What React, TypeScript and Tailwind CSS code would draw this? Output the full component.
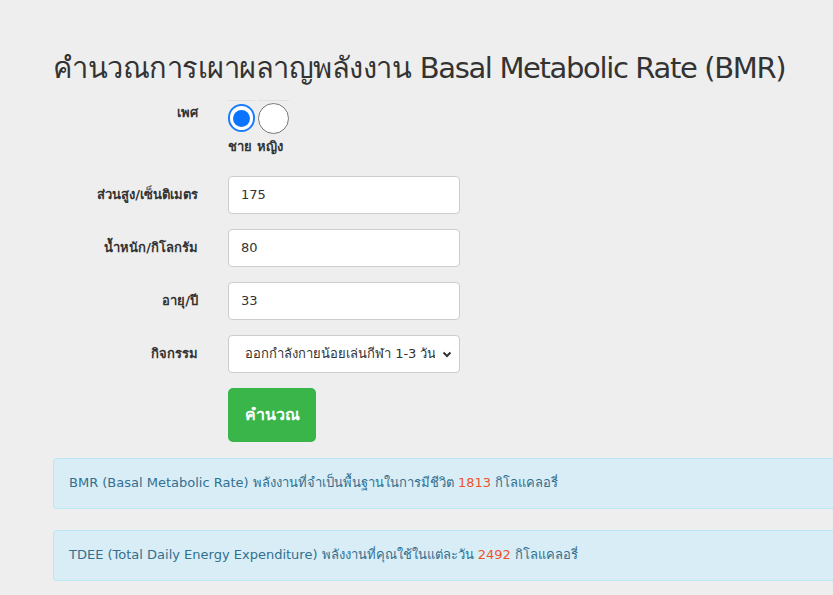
import React from "react";

const font = { fontFamily: '"DejaVu Sans", "Noto Sans", sans-serif' };

function Row({ label, children }: { label: string; children: React.ReactNode }) {
  return (
    <div className="flex items-center h-[38px] mb-[15px]">
      <div className="w-[145px] text-right text-[13px] font-bold text-[#333]">{label}</div>
      <div className="ml-[30px]">{children}</div>
    </div>
  );
}

export default function App() {
  return (
    <div className="min-h-[595px] w-full bg-[#eeeeee] overflow-hidden" style={font}>
      <div className="pl-[53px] pt-[49px]">
        <h1 className="text-[29px] leading-[38px] text-[#333] whitespace-nowrap tracking-[-0.5px]">
          คำนวณการเผาผลาญพลังงาน <span className="tracking-[-1.35px]">Basal Metabolic Rate (BMR)</span>
        </h1>
        <div className="mt-[13px] flex">
          <div className="w-[145px] text-right text-[13px] font-bold text-[#333] pt-[3px]">เพศ</div>
          <div className="ml-[30px]">
            <div className="flex gap-[3px]">
              <div className="border-t border-[#e0e0e0] pt-[3px]">
                <div className="w-[27px] h-[28px] rounded-full border-2 border-[#1a7cff] bg-white flex items-center justify-center">
                  <div className="w-[17px] h-[17px] rounded-full bg-[#0a74ff]" />
                </div>
              </div>
              <div className="border-t border-[#e0e0e0] pt-[2px]">
                <div className="w-[31px] h-[31px] rounded-full border border-[#777] bg-white" />
              </div>
            </div>
            <div className="mt-[3px] text-[13px] font-bold text-[#333]">ชาย หญิง</div>
          </div>
        </div>
        <div className="mt-[19px]">
          <Row label="ส่วนสูง/เซ็นติเมตร">
            <div className="w-[232px] h-[38px] bg-white border border-[#ccc] rounded-[4px] flex items-center px-[12px] text-[13px] text-[#333]">175</div>
          </Row>
          <Row label="น้ำหนัก/กิโลกรัม">
            <div className="w-[232px] h-[38px] bg-white border border-[#ccc] rounded-[4px] flex items-center px-[12px] text-[13px] text-[#333]">80</div>
          </Row>
          <Row label="อายุ/ปี">
            <div className="w-[232px] h-[38px] bg-white border border-[#ccc] rounded-[4px] flex items-center px-[12px] text-[13px] text-[#333]">33</div>
          </Row>
          <Row label="กิจกรรม">
            <div className="w-[232px] h-[38px] bg-white border border-[#ccc] rounded-[4px] flex items-center pl-[16px] pr-[6px] text-[13px] text-[#333]">
              <span className="flex-1 overflow-hidden whitespace-nowrap">ออกกำลังกายน้อยเล่นกีฬา 1-3 วัน</span>
              <svg width="12" height="12" viewBox="0 0 12 12" className="ml-[6px] shrink-0">
                <path d="M2.5 4.5 L6 8 L9.5 4.5" fill="none" stroke="#333" strokeWidth="2" />
              </svg>
            </div>
          </Row>
          <div className="ml-[175px]">
            <button className="w-[88px] h-[54px] rounded-[5px] bg-[#39b54a] text-white text-[16px] font-bold">คำนวณ</button>
          </div>
        </div>
        <div className="mt-[16px] h-[51px] bg-[#d9edf7] border border-[#bce8f1] border-r-0 rounded-l-[4px] flex items-center pl-[15px] text-[13px] text-[#31708f] whitespace-nowrap">
          BMR (Basal Metabolic Rate) พลังงานที่จำเป็นพื้นฐานในการมีชีวิต&nbsp;<span className="text-[#f0532a]">1813</span>&nbsp;กิโลแคลอรี่
        </div>
        <div className="mt-[21px] h-[51px] bg-[#d9edf7] border border-[#bce8f1] border-r-0 rounded-l-[4px] flex items-center pl-[15px] text-[13px] text-[#31708f] whitespace-nowrap">
          TDEE (Total Daily Energy Expenditure) พลังงานที่คุณใช้ในแต่ละวัน&nbsp;<span className="text-[#f0532a]">2492</span>&nbsp;กิโลแคลอรี่
        </div>
      </div>
    </div>
  );
}
